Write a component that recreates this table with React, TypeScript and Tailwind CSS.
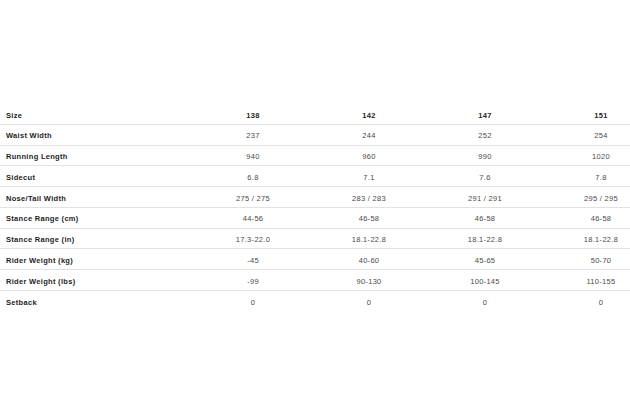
import React from "react";

type Row = { label: string; values: string[]; head?: boolean };

const rows: Row[] = [
  { label: "Size", values: ["138", "142", "147", "151"], head: true },
  { label: "Waist Width", values: ["237", "244", "252", "254"] },
  { label: "Running Length", values: ["940", "960", "990", "1020"] },
  { label: "Sidecut", values: ["6.8", "7.1", "7.6", "7.8"] },
  { label: "Nose/Tail Width", values: ["275 / 275", "283 / 283", "291 / 291", "295 / 295"] },
  { label: "Stance Range (cm)", values: ["44-56", "46-58", "46-58", "46-58"] },
  { label: "Stance Range (in)", values: ["17.3-22.0", "18.1-22.8", "18.1-22.8", "18.1-22.8"] },
  { label: "Rider Weight (kg)", values: ["-45", "40-60", "45-65", "50-70"] },
  { label: "Rider Weight (lbs)", values: ["-99", "90-130", "100-145", "110-155"] },
  { label: "Setback", values: ["0", "0", "0", "0"] },
];

export default function App() {
  return (
    <div
      className="w-[630px] h-[420px] bg-white overflow-hidden pt-[104px]"
      style={{ fontFamily: '"Liberation Sans", Arial, sans-serif' }}
    >
      <div className="w-[630px] overflow-hidden">
        {rows.map((row, i) => (
          <div
            key={row.label}
            className={
              "grid grid-cols-[195px_116px_116px_116px_116px] w-[659px] h-[20.75px] items-center pt-[3px] text-[7.5px] leading-none tracking-[0.3px] " +
              (i < rows.length - 1 ? "border-b border-[#e2e2e2]" : "")
            }
          >
            <div className="pl-[6px] font-bold text-[#1e1e1e]">{row.label}</div>
            {row.values.map((v, j) => (
              <div
                key={j}
                className={
                  row.head
                    ? "text-center font-bold text-[#1e1e1e]"
                    : "text-center text-[#4a4a4a]"
                }
              >
                {v}
              </div>
            ))}
          </div>
        ))}
      </div>
    </div>
  );
}
